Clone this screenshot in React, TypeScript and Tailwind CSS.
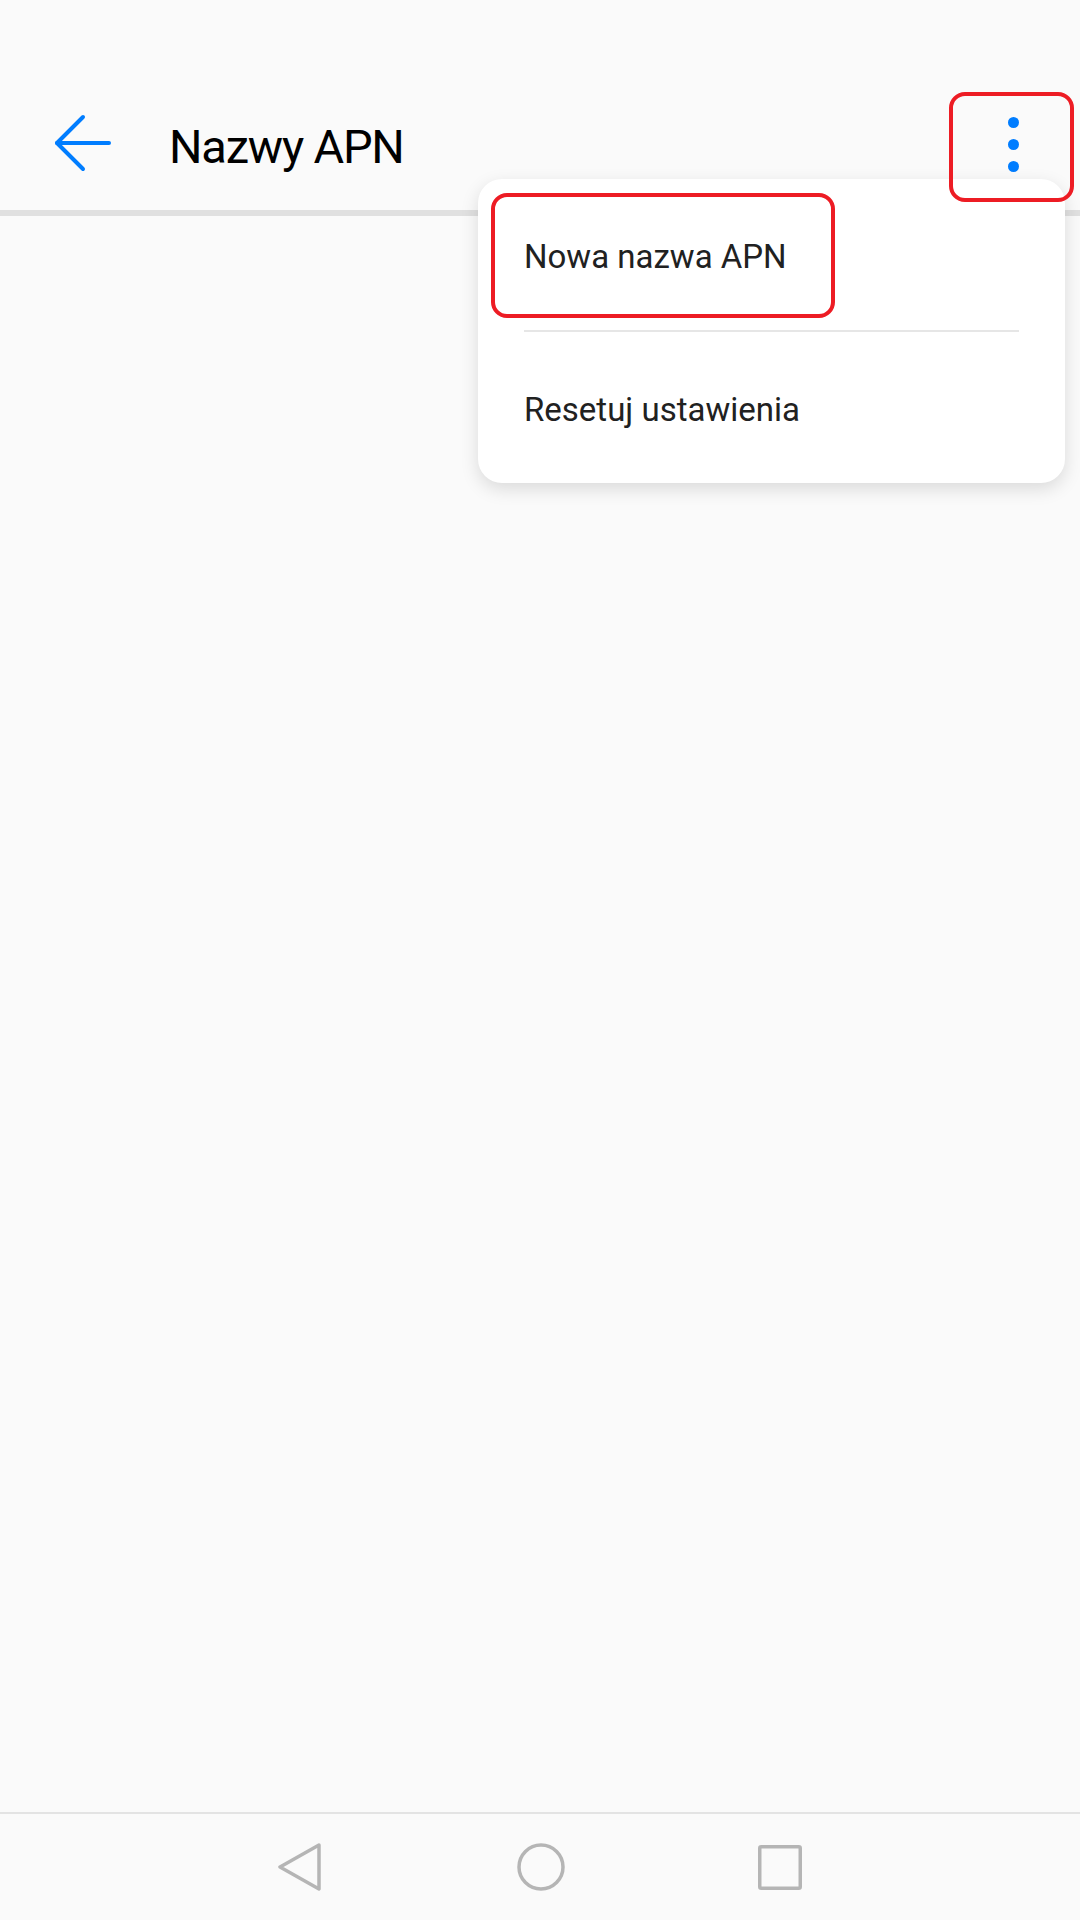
import React from 'react';

const App = () => {
  return <div className="relative w-[1080px] h-[1920px] bg-[#fafafa] flex flex-col overflow-hidden font-['Roboto',sans-serif]">
      {/* status bar area, empty */}
      <div className="h-[75px]" />
      <div className="h-[135px] flex items-center">
        <svg className="ml-[53px] w-[60px] h-[60px]" viewBox="0 0 60 60" fill="none" stroke="#007dff" strokeWidth="4" strokeLinecap="round" strokeLinejoin="round">
          <path d="M30 4 L4 30 L30 56" />
          <path d="M4 30 H56" />
        </svg>
        <h1 className="ml-[56px] mt-[7px] text-[47px] leading-none tracking-[-1.2px] text-black">
          Nazwy APN
        </h1>
        <div className="ml-auto mr-[61px] mt-[3px] flex flex-col gap-[11px]">
          <div className="w-[11px] h-[11px] rounded-full bg-[#007dff]" />
          <div className="w-[11px] h-[11px] rounded-full bg-[#007dff]" />
          <div className="w-[11px] h-[11px] rounded-full bg-[#007dff]" />
        </div>
      </div>
      <div className="h-[6px] bg-[#e0e0e0]" />
      <div className="flex-1" />
      <div className="h-[2px] bg-[#e3e3e3]" />
      <div className="h-[106px] flex items-center">
        <svg className="ml-[278px] w-[43px] h-[48px]" viewBox="0 0 43 48" fill="none" stroke="#b5b5b5" strokeWidth="3.5" strokeLinejoin="round">
          <path d="M41 2 L2 24 L41 46 Z" />
        </svg>
        <svg className="ml-[196px] w-[48px] h-[48px]" viewBox="0 0 48 48" fill="none" stroke="#b5b5b5" strokeWidth="3.5">
          <circle cx="24" cy="24" r="22" />
        </svg>
        <svg className="ml-[193px] w-[44px] h-[45px]" viewBox="0 0 44 45" fill="none" stroke="#b5b5b5" strokeWidth="3.5">
          <rect x="1.75" y="1.75" width="40.5" height="41.5" rx="1.5" />
        </svg>
      </div>

      {/* overflow menu */}
      <div className="absolute left-[478px] top-[179px] w-[587px] rounded-[24px] bg-white shadow-[0_6px_18px_rgba(0,0,0,0.13)]">
        <div className="h-[151px] flex items-center pl-[46px] pt-[4px] text-[33px] text-[#212121]">
          Nowa nazwa APN
        </div>
        <div className="mx-[46px] h-[2px] bg-[#e6e6e6]" />
        <div className="h-[151px] flex items-center pl-[46px] pt-[4px] text-[33px] text-[#212121]">
          Resetuj ustawienia
        </div>
      </div>

      {/* red highlight frames */}
      <div className="absolute left-[491px] top-[193px] w-[344px] h-[125px] rounded-[16px] border-[4px] border-[#ed1c24]" />
      <div className="absolute left-[949px] top-[92px] w-[125px] h-[110px] rounded-[16px] border-[4px] border-[#ed1c24]" />
    </div>;
};
export default App;
